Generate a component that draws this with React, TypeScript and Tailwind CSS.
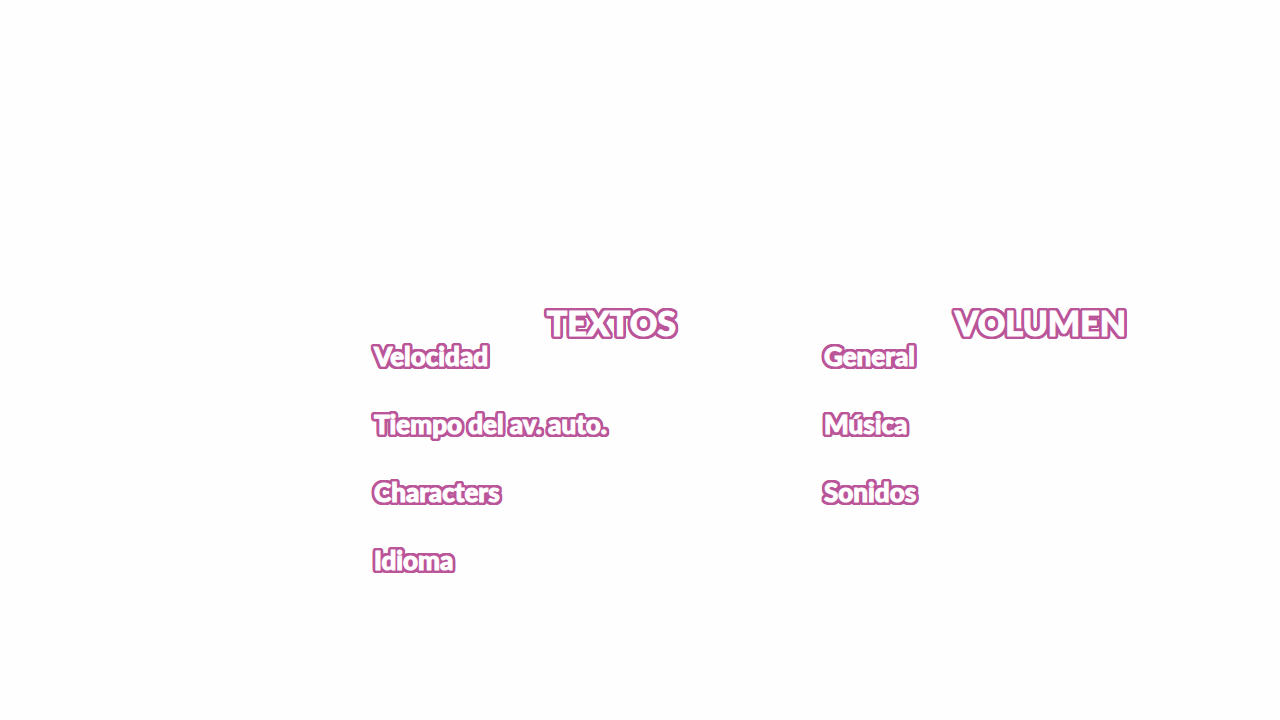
const groups = [
  { title: "TEXTOS", items: ["Velocidad", "Tiempo del av. auto.", "Characters", "Idioma"] },
  { title: "VOLUMEN", items: ["General", "Música", "Sonidos"] },
];

export default function App() {
  return (
    <main className="min-h-screen bg-[#fefefe] pt-[304px] pr-1.5 pl-[374px] font-['Lato',sans-serif] font-black text-white [-webkit-text-stroke:1px_white] [text-shadow:3px_0_#bb5599,3px_1px_#bb5599,3px_2px_#bb5599,2px_3px_#bb5599,1px_3px_#bb5599,0_3px_#bb5599,-1px_3px_#bb5599,-2px_3px_#bb5599,-3px_2px_#bb5599,-3px_1px_#bb5599,-3px_0_#bb5599,-3px_-1px_#bb5599,-3px_-2px_#bb5599,-2px_-3px_#bb5599,-1px_-3px_#bb5599,0_-3px_#bb5599,1px_-3px_#bb5599,2px_-3px_#bb5599,3px_-2px_#bb5599,3px_-1px_#bb5599,1px_1px_#bb5599,-1px_-1px_#bb5599,1px_-1px_#bb5599,-1px_1px_#bb5599]">
      <div className="grid grid-cols-2">
        {groups.map((group) => (
          <section key={group.title}>
            <h2 className="max-w-[302px] text-right text-[34px] leading-[38px]">{group.title}</h2>
            <ul className="flex flex-col gap-10">
              {group.items.map((item) => (
                <li key={item} className="text-[26px] leading-7 whitespace-nowrap">
                  {item}
                </li>
              ))}
            </ul>
          </section>
        ))}
      </div>
    </main>
  );
}
